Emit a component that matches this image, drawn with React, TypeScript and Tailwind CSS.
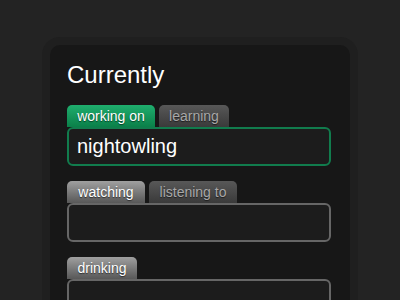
const fieldGroups = [
  { tabs: [{ label: "working on", w: "w-[88px]" }, { label: "learning", w: "w-[70px]" }], value: "nightowling", green: true },
  { tabs: [{ label: "watching", w: "w-[78px]" }, { label: "listening to", w: "w-[88px]" }], value: "", green: false },
  { tabs: [{ label: "drinking", w: "w-[70px]" }], value: "", green: false },
];

const Tab = ({ label, w, active, green }: { label: string; w: string; active: boolean; green: boolean }) => {
  let cls = "bg-gradient-to-b from-[#585858] to-[#3a3a3a] text-[#a8a8a8]";
  if (active && green) cls = "bg-gradient-to-b from-[#1fae6e] to-[#0a8049] text-white";
  else if (active) cls = "bg-gradient-to-b from-[#a0a0a0] to-[#585858] text-white";
  return (
    <div
      className={`h-[22px] ${w} text-center rounded-t-[5px] text-[14px] leading-[22px] [text-shadow:0_1px_1px_rgba(0,0,0,0.55)] ${cls}`}
    >
      {label}
    </div>
  );
};

export default function App() {
  return (
    <div className="w-[400px] h-[300px] overflow-hidden bg-[#232323] font-['Liberation_Sans',Arial,sans-serif]">
      <div className="mx-auto mt-[45px] w-[300px] min-h-[300px] rounded-[10px] bg-[#171717] pt-[16px] pl-[17px] pr-[19px] shadow-[0_0_0_8px_#1f1f1f]">
        <h1 className="text-[24px] leading-[28px] text-white">Currently</h1>
        <div className="mt-[16px] flex flex-col gap-[15px]">
          {fieldGroups.map((g, i) => (
            <div key={i} className="flex flex-col">
              <div className="flex gap-[4px]">
                {g.tabs.map((t, j) => (
                  <Tab key={t.label} label={t.label} w={t.w} active={j === 0} green={g.green} />
                ))}
              </div>
              <div
                className={`h-[39px] rounded-[6px] border-2 bg-[#1c1c1c] px-[8px] text-[20px] leading-[35px] text-white ${
                  g.green ? "border-[#117c4d]" : "border-[#666666]"
                }`}
              >
                {g.value}
              </div>
            </div>
          ))}
        </div>
      </div>
    </div>
  );
}
